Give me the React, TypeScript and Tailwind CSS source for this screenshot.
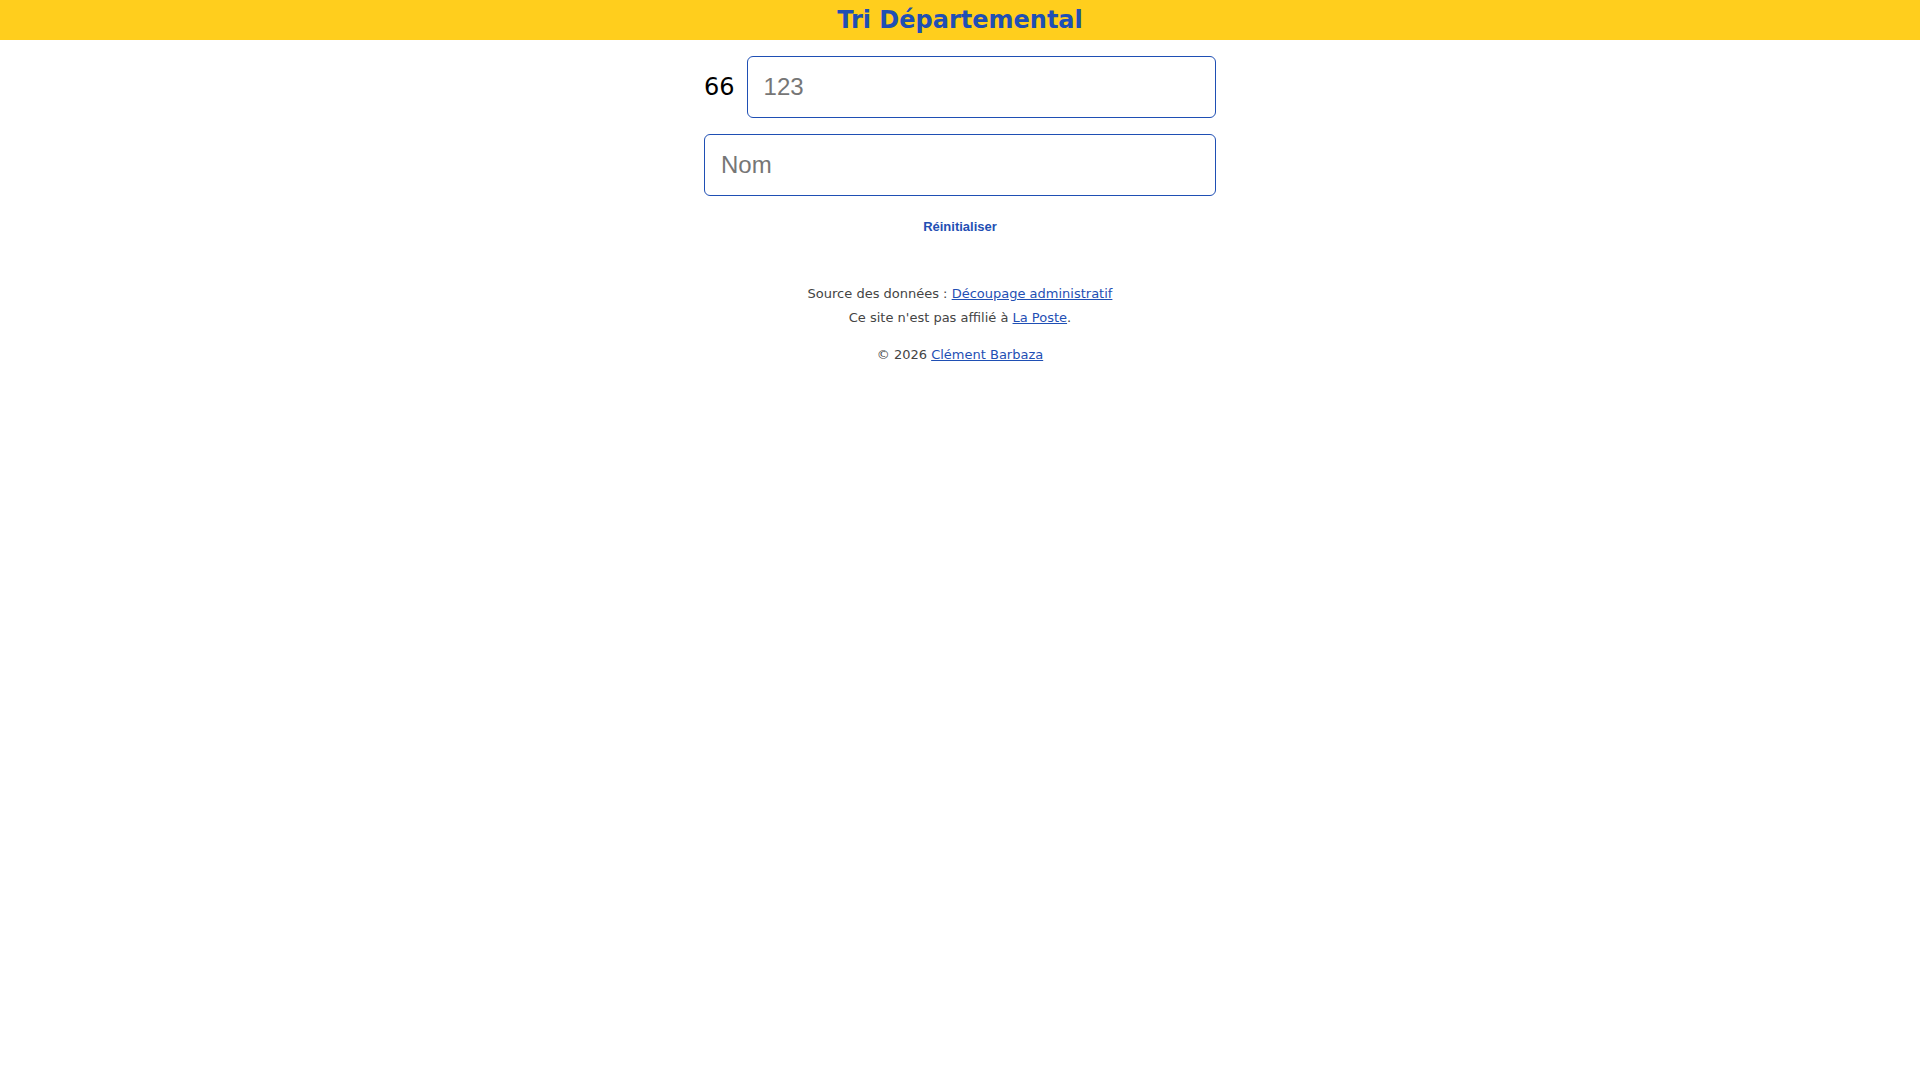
import React, { useState } from "react";

const App = () => {
  const [numero, setNumero] = useState("");
  const [nom, setNom] = useState("");

  const reset = () => {
    setNumero("");
    setNom("");
  };

  return (
    <div className="min-h-screen bg-white font-['DejaVu_Sans',sans-serif]">
      <header className="h-10 bg-[#ffce1d] flex items-center justify-center">
        <h1 className="text-2xl font-bold leading-7 text-[#1f4fb4]">
          Tri Départemental
        </h1>
      </header>

      <main className="w-[512px] mx-auto pt-4 flex flex-col">
        <div className="flex items-center gap-3">
          <span className="text-2xl text-black">66</span>
          <input
            value={numero}
            onChange={(e) => setNumero(e.target.value)}
            placeholder="123"
            className="flex-1 min-w-0 border border-[#1f4fb4] rounded-md p-4 text-2xl leading-7 font-['Liberation_Sans',Arial,sans-serif] placeholder:text-[#767676] outline-none"
          />
        </div>
        <input
          value={nom}
          onChange={(e) => setNom(e.target.value)}
          placeholder="Nom"
          className="mt-4 w-full border border-[#1f4fb4] rounded-md p-4 text-2xl leading-7 font-['Liberation_Sans',Arial,sans-serif] placeholder:text-[#767676] outline-none"
        />
        <button
          onClick={reset}
          className="mt-4 self-center py-[7px] px-2 text-[13px] leading-[15px] font-bold text-[#1f4fb4] font-['Liberation_Sans',Arial,sans-serif] cursor-pointer"
        >
          Réinitialiser
        </button>
      </main>

      <footer className="mt-[41px] text-center text-[13px] leading-6 text-[#444]">
        <p>
          Source des données :{" "}
          <a href="#" className="text-[#1f4fb4] underline">
            Découpage administratif
          </a>
        </p>
        <p>
          Ce site n'est pas affilié à{" "}
          <a href="#" className="text-[#1f4fb4] underline">
            La Poste
          </a>
          .
        </p>
        <p className="mt-[13px]">
          © 2026{" "}
          <a href="#" className="text-[#1f4fb4] underline">
            Clément Barbaza
          </a>
        </p>
      </footer>
    </div>
  );
};

export default App;
